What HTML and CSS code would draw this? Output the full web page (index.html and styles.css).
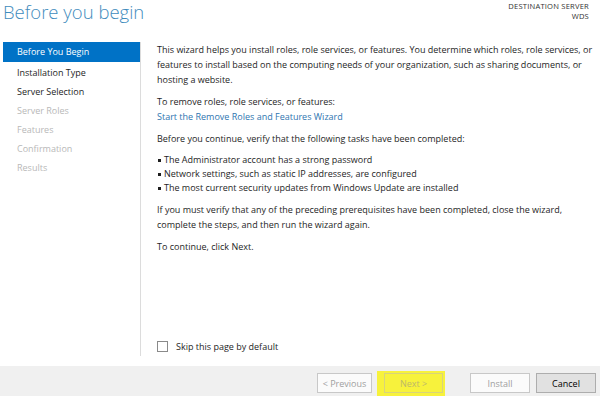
FILE: index.html
```html
<!DOCTYPE html>
<html>
    <head>
        <meta charset="UTF-8">
        <meta name="viewport" content="width=device-width, initial-scale=1.0">
        <link rel="stylesheet" href="styles.css">
    </head>
    <body>
        <div class="wizard">
            <div class="header">
                <div class="title">Before you begin</div>
                <div class="dest">
                    <div>DESTINATION SERVER</div>
                    <div>WDS</div>
                </div>
            </div>

            <div class="main">
                <div class="steps">
                    <div class="step current">Before You Begin</div>
                    <div class="step">Installation Type</div>
                    <div class="step">Server Selection</div>
                    <div class="step off">Server Roles</div>
                    <div class="step off">Features</div>
                    <div class="step off">Confirmation</div>
                    <div class="step off">Results</div>
                </div>

                <div class="content">
                    <div class="text">
                        <p>This wizard helps you install roles, role services, or features. You determine which roles, role services, or features to install based on the computing needs of your organization, such as sharing documents, or hosting a website.</p>
                        <p>To remove roles, role services, or features:<br><a href="#">Start the Remove Roles and Features Wizard</a></p>
                        <p>Before you continue, verify that the following tasks have been completed:</p>
                        <ul>
                            <li>The Administrator account has a strong password</li>
                            <li>Network settings, such as static IP addresses, are configured</li>
                            <li>The most current security updates from Windows Update are installed</li>
                        </ul>
                        <p>If you must verify that any of the preceding prerequisites have been completed, close the wizard, complete the steps, and then run the wizard again.</p>
                        <p>To continue, click Next.</p>
                    </div>
                    <label class="skip"><span class="box"></span>Skip this page by default</label>
                </div>
            </div>

            <div class="footer">
                <button class="btn prev" disabled>&lt; Previous</button>
                <div class="highlight"><button class="btn" disabled>Next &gt;</button></div>
                <button class="btn install" disabled>Install</button>
                <button class="btn cancel">Cancel</button>
            </div>
        </div>
    </body>
</html>
```

FILE: styles.css
```css
body {
    margin: 0;
    background: #fff;
    font-family: "Open Sans", "Noto Sans", sans-serif;
    font-size: 9px;
    color: #1e1e1e;
}

.wizard {
    width: 600px;
    height: 396px;
    display: flex;
    flex-direction: column;
}

.header {
    height: 42px;
    display: flex;
    justify-content: space-between;
    align-items: flex-start;
}

.title {
    font-size: 18.5px;
    font-weight: 300;
    color: #3f8cbd;
    padding-left: 3px;
    line-height: 24px;
}

.dest {
    font-size: 7.6px;
    line-height: 10px;
    letter-spacing: 0.2px;
    text-align: right;
    padding-right: 11px;
    padding-top: 1px;
    color: #333;
}

.main {
    flex: 1;
    display: flex;
}

.steps {
    width: 137px;
    padding-left: 3px;
    border-right: 1px solid #dcdcdc;
    margin-bottom: 10px;
}

.step {
    height: 19px;
    line-height: 19px;
    padding-left: 14px;
    color: #1e1e1e;
}

.step.current {
    height: 20px;
    line-height: 20px;
    margin-bottom: 1px;
    background: #0072c6;
    color: #fff;
}

.step.off {
    color: #b8b8b8;
}

.content {
    flex: 1;
    display: flex;
    flex-direction: column;
    justify-content: space-between;
    padding: 0 0 13px 16px;
}

.text p {
    margin: 0 0 7px 0;
    line-height: 15px;
}

.text a {
    color: #2e75b0;
    text-decoration: none;
}

.text ul {
    margin: 0 0 7px 0;
    padding-left: 0;
    list-style: none;
}

.text li {
    line-height: 14px;
    padding-left: 7px;
    position: relative;
}

.text li::before {
    content: "";
    position: absolute;
    left: 1px;
    top: 6px;
    width: 3px;
    height: 3px;
    background: #1e1e1e;
}

.skip {
    display: flex;
    align-items: center;
    gap: 8px;
}

.box {
    width: 9px;
    height: 9px;
    border: 1px solid #8a8a8a;
    background: #fff;
}

.footer {
    height: 30px;
    background: #f0f0f0;
    display: flex;
    align-items: flex-end;
    padding-right: 4px;
    justify-content: flex-end;
}

.btn {
    width: 60px;
    height: 20px;
    margin-bottom: 3px;
    border: 1px solid #c8c8c8;
    background: #fbfbfb;
    color: #a0a0a0;
    font-family: "Open Sans", "Noto Sans", sans-serif;
    font-size: 9px;
    padding: 0;
}

.prev {
    width: 55px;
}

.highlight {
    background: #f7f23c;
    height: 25px;
    padding: 0 2px 0 7px;
    margin: 0 25px 0 5px;
    display: flex;
    align-items: flex-end;
}

.highlight .btn {
    width: 59px;
    background: transparent;
    border-color: #d9d47a;
    color: #bdb86a;
}

.cancel {
    margin-left: 6px;
    background: #e1e1e1;
    border-color: #adadad;
    color: #000;
}
```
